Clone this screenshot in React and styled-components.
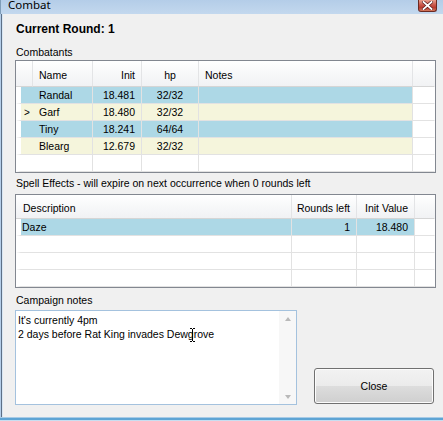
import React from "react";
import styled, { createGlobalStyle } from "styled-components";

const GlobalStyle = createGlobalStyle`
  html, body {
    margin: 0;
    padding: 0;
    background: #f0f0f0;
    overflow: hidden;
  }
  body {
    font-family: "Liberation Sans", Arial, sans-serif;
    font-size: 10.5px;
    color: #000;
  }
  * { box-sizing: border-box; }
`;

const BLUE = "#add8e6";
const BEIGE = "#f5f5dc";
const GRID = "#e2e2e2";

const combatants = [
  { name: "Randal", init: "18.481", hp: "32/32", bg: BLUE },
  { name: "Garf", init: "18.480", hp: "32/32", bg: BEIGE, current: true },
  { name: "Tiny", init: "18.241", hp: "64/64", bg: BLUE },
  { name: "Blearg", init: "12.679", hp: "32/32", bg: BEIGE },
];

const effects = [{ desc: "Daze", rounds: "1", init: "18.480", bg: BLUE }];

const COMBAT_COLS = "17px 60px 49px 57px 214px 22px";
const SPELL_COLS = "276px 65px 58px 20px";

const App = () => {
  return (
    <>
      <GlobalStyle />
      <Window>
        {/* Title bar */}
        <TitleBar>
          <TitleText>Combat</TitleText>
          <CloseX>
            <svg width="11" height="9" viewBox="0 0 11 9">
              <path
                d="M1.5 1 L9.5 8 M9.5 1 L1.5 8"
                stroke="#5a1a1a"
                strokeWidth="3.2"
                strokeLinecap="square"
              />
              <path
                d="M1.5 1 L9.5 8 M9.5 1 L1.5 8"
                stroke="#fff"
                strokeWidth="1.8"
                strokeLinecap="square"
              />
            </svg>
          </CloseX>
        </TitleBar>

        <Middle>
          <LeftFrame />
          <Client>
            <RoundLabel>Current Round: 1</RoundLabel>

            <Label $mt={10}>Combatants</Label>
            <Grid $mt={1}>
              <Row $cols={COMBAT_COLS} $h={26}>
                <HeadCell />
                <HeadCell>Name</HeadCell>
                <HeadCell $align="flex-end">Init</HeadCell>
                <HeadCell $align="center">hp</HeadCell>
                <HeadCell>Notes</HeadCell>
                <HeadCell $last />
              </Row>
              {combatants.map((c) => (
                <Row key={c.name} $cols={COMBAT_COLS} $h={17}>
                  <Cell $bg={c.bg} $gap>
                    {c.current && <Marker>&gt;</Marker>}
                  </Cell>
                  <Cell $bg={c.bg}>{c.name}</Cell>
                  <Cell $bg={c.bg} $align="flex-end">
                    {c.init}
                  </Cell>
                  <Cell $bg={c.bg} $align="center">
                    {c.hp}
                  </Cell>
                  <Cell $bg={c.bg} />
                  <Cell $last />
                </Row>
              ))}
              <Row $cols={COMBAT_COLS} $h={17}>
                <Cell $gap />
                <Cell />
                <Cell />
                <Cell />
                <Cell />
                <Cell $last />
              </Row>
            </Grid>

            <Label $mt={4}>
              Spell Effects - will expire on next occurrence when 0 rounds left
            </Label>
            <Grid $mt={4}>
              <Row $cols={SPELL_COLS} $h={24}>
                <HeadCell $pl={7}>Description</HeadCell>
                <HeadCell $align="flex-end">Rounds left</HeadCell>
                <HeadCell $align="flex-end">Init Value</HeadCell>
                <HeadCell $last />
              </Row>
              {effects.map((e) => (
                <Row key={e.desc} $cols={SPELL_COLS} $h={17}>
                  <Cell $bg={e.bg} $gap $pl={1}>
                    {e.desc}
                  </Cell>
                  <Cell $bg={e.bg} $align="flex-end">
                    {e.rounds}
                  </Cell>
                  <Cell $bg={e.bg} $align="flex-end">
                    {e.init}
                  </Cell>
                  <Cell $last />
                </Row>
              ))}
              {[0, 1, 2].map((i) => (
                <Row key={i} $cols={SPELL_COLS} $h={17}>
                  <Cell $gap />
                  <Cell />
                  <Cell />
                  <Cell $last />
                </Row>
              ))}
            </Grid>

            <Label $mt={6}>Campaign notes</Label>
            <BottomRow>
              <NotesBox>
                <NotesText>
                  It's currently 4pm
                  <br />
                  2 days before Rat King invades Dewgrove
                </NotesText>
                <ScrollBar>
                  <Arrow $up />
                  <Arrow />
                </ScrollBar>
                <IBeam>
                  <svg width="5" height="14" viewBox="0 0 5 14">
                    <path
                      d="M0 0.5 H2 M3 0.5 H5 M2.5 1 V13 M0 13.5 H2 M3 13.5 H5"
                      stroke="#000"
                      strokeWidth="1"
                    />
                  </svg>
                </IBeam>
              </NotesBox>
              <CloseButton>Close</CloseButton>
            </BottomRow>
          </Client>
        </Middle>
        <BottomFrame />
      </Window>
    </>
  );
};

export default App;

const Window = styled.div`
  width: 443px;
  height: 421px;
  display: flex;
  flex-direction: column;
  overflow: hidden;
`;

const TitleBar = styled.div`
  height: 14px;
  flex: none;
  display: flex;
  align-items: flex-start;
  background: linear-gradient(#b4cde8, #c3d8ee);
  border-left: 1px solid #7f9db9;
`;

const TitleText = styled.div`
  font-family: "Noto Sans", "Liberation Sans", sans-serif;
  font-size: 11.5px;
  line-height: 12px;
  margin-top: -1px;
  padding-left: 7px;
`;

const CloseX = styled.div`
  margin-left: auto;
  margin-right: 6px;
  width: 19px;
  height: 12px;
  border: 1px solid #6b2a22;
  border-top: none;
  border-radius: 0 0 3px 3px;
  background: linear-gradient(#e8a08e, #c9564a 45%, #b83a2e 70%, #d57a5e);
  display: flex;
  align-items: center;
  justify-content: center;
`;

const Middle = styled.div`
  display: flex;
  flex: 1;
`;

const LeftFrame = styled.div`
  width: 3px;
  flex: none;
  background: linear-gradient(
    to right,
    #b4cde8 0 1px,
    #5d6f86 1px 2px,
    #d7e6f4 2px
  );
`;

const Client = styled.div`
  flex: 1;
  display: flex;
  flex-direction: column;
  padding: 8px 0 0 12px;
  background: #f0f0f0;
`;

const BottomFrame = styled.div`
  height: 4px;
  flex: none;
  background: linear-gradient(#a8cbe6 0 1px, #5ea4d4 1px 3px, #c7def1 3px);
`;

const RoundLabel = styled.div`
  font-weight: bold;
  font-size: 12px;
  line-height: 14px;
  padding-left: 1px;
`;

const Label = styled.div`
  font-size: 10.5px;
  line-height: 13px;
  margin-top: ${(p) => p.$mt}px;
  padding-left: 1px;
`;

const Grid = styled.div`
  width: 421px;
  margin-top: ${(p) => p.$mt}px;
  border: 1px solid #828790;
  background: #fff;
  display: flex;
  flex-direction: column;
`;

const Row = styled.div`
  display: grid;
  grid-template-columns: ${(p) => p.$cols};
  height: ${(p) => p.$h}px;
`;

const HeadCell = styled.div`
  display: flex;
  align-items: center;
  justify-content: ${(p) => p.$align || "flex-start"};
  padding: 2px 6px 0 ${(p) => (p.$pl != null ? p.$pl : 6)}px;
  background: linear-gradient(#ffffff, #f7f8f9 50%, #f1f2f4);
  border-right: 1px solid ${(p) => (p.$last ? "transparent" : "#e3e4e6")};
  border-bottom: 1px solid #d5d5d5;
  white-space: nowrap;
`;

const Cell = styled.div`
  display: flex;
  align-items: center;
  justify-content: ${(p) => p.$align || "flex-start"};
  padding: 0 6px 0 ${(p) => (p.$pl != null ? p.$pl : 6)}px;
  background: ${(p) => p.$bg || "#fff"};
  border-left: ${(p) => (p.$gap ? "5px solid #fff" : "none")};
  border-right: 1px solid ${(p) => (p.$last ? "transparent" : GRID)};
  border-bottom: 1px solid ${GRID};
  white-space: nowrap;
`;

const Marker = styled.span`
  font-size: 10px;
  padding-left: 0;
  margin-left: -3px;
`;

const BottomRow = styled.div`
  display: flex;
  align-items: flex-end;
  margin-top: 3px;
`;

const NotesBox = styled.div`
  position: relative;
  width: 282px;
  height: 95px;
  border: 1px solid #a4c2de;
  background: #fff;
  display: flex;
`;

const NotesText = styled.div`
  flex: 1;
  padding: 2px 0 0 2px;
  font-size: 10.5px;
  line-height: 14px;
`;

const ScrollBar = styled.div`
  width: 17px;
  flex: none;
  background: #f7f7f7;
  display: flex;
  flex-direction: column;
  justify-content: space-between;
  align-items: center;
  padding: 6px 0 5px;
`;

const Arrow = styled.div`
  width: 0;
  height: 0;
  border-left: 3.5px solid transparent;
  border-right: 3.5px solid transparent;
  border-${(p) => (p.$up ? "bottom" : "top")}: 4px solid #b9b9b9;
`;

const IBeam = styled.div`
  position: absolute;
  left: 174px;
  top: 17px;
  line-height: 0;
`;

const CloseButton = styled.button`
  width: 120px;
  height: 36px;
  margin-left: 17px;
  margin-bottom: 1px;
  border: 1px solid #707070;
  border-radius: 3px;
  background: linear-gradient(#f2f2f2, #ebebeb 50%, #dddddd 50%, #cfcfcf);
  box-shadow: inset 0 0 0 1px #fcfcfc;
  font-family: "Liberation Sans", Arial, sans-serif;
  font-size: 10.5px;
  color: #000;
  padding: 0;
`;
